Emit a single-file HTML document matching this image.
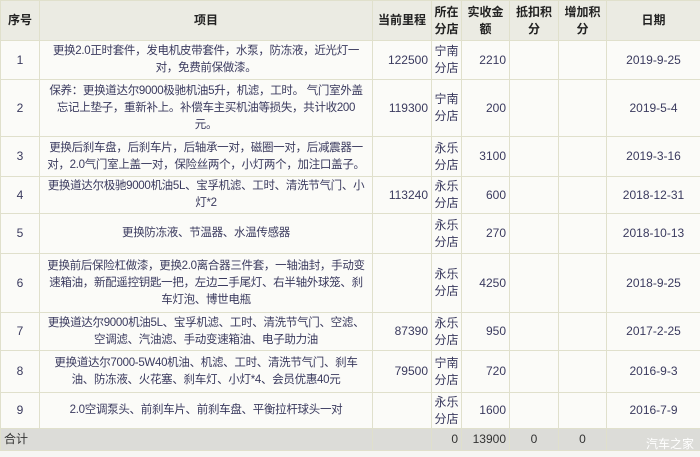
<!DOCTYPE html>
<html><head><meta charset="utf-8">
<style>
html,body{margin:0;padding:0;width:700px;height:457px;overflow:hidden;background:#f6f6f4;}
table{position:absolute;left:0;top:0;border-collapse:collapse;table-layout:fixed;width:700px;
font-family:"Liberation Sans","Noto Sans CJK SC",sans-serif;font-size:12px;color:#3a3a5e;line-height:17px;}
td,th{border:1px solid #e0e0cc;padding:0 3px;background:#fbfbf8;overflow:hidden;}
th{background:#ebebe3;color:#222;font-weight:bold;line-height:17px;}
td.p{padding:0;font-size:11.5px;letter-spacing:-0.3px;white-space:nowrap;}
td.s,th.s{padding:0;text-align:center;}
.c{text-align:center}.r{text-align:right}
tr.t td{background:#dcdcd8;color:#333;}
.wm{position:absolute;right:6px;top:437px;color:#fff;font-family:"Noto Sans CJK SC",sans-serif;font-size:12px;line-height:14px}
</style></head><body>
<table>
<colgroup><col style="width:39px"><col style="width:333px"><col style="width:59px"><col style="width:30px"><col style="width:48px"><col style="width:49px"><col style="width:48px"><col style="width:94px"></colgroup>
<tr style="height:40px"><th>序号</th><th>项目</th><th>当前里程</th><th class="s">所在分店</th><th>实收金额</th><th>抵扣积分</th><th>增加积分</th><th>日期</th></tr>
<tr style="height:39px"><td class="c">1</td><td class="c p">更换2.0正时套件，发电机皮带套件，水泵，防冻液，近光灯一<br>对，免费前保做漆。</td><td class="r">122500</td><td class="s">宁南分店</td><td class="r">2210</td><td></td><td></td><td class="c">2019-9-25</td></tr>
<tr style="height:57px"><td class="c">2</td><td class="c p">保养：更换道达尔9000极驰机油5升，机滤，工时。 气门室外盖<br>忘记上垫子，重新补上。补偿车主买机油等损失，共计收200<br>元。</td><td class="r">119300</td><td class="s">宁南分店</td><td class="r">200</td><td></td><td></td><td class="c">2019-5-4</td></tr>
<tr style="height:40px"><td class="c">3</td><td class="c p">更换后刹车盘，后刹车片，后轴承一对，磁圈一对，后减震器一<br>对，2.0气门室上盖一对，保险丝两个，小灯两个，加注口盖子。</td><td class="r"></td><td class="s">永乐分店</td><td class="r">3100</td><td></td><td></td><td class="c">2019-3-16</td></tr>
<tr style="height:37px"><td class="c">4</td><td class="c p">更换道达尔极驰9000机油5L、宝孚机滤、工时、清洗节气门、小<br>灯*2</td><td class="r">113240</td><td class="s">永乐分店</td><td class="r">600</td><td></td><td></td><td class="c">2018-12-31</td></tr>
<tr style="height:40px"><td class="c">5</td><td class="c p">更换防冻液、节温器、水温传感器</td><td class="r"></td><td class="s">永乐分店</td><td class="r">270</td><td></td><td></td><td class="c">2018-10-13</td></tr>
<tr style="height:59px"><td class="c">6</td><td class="c p">更换前后保险杠做漆，更换2.0离合器三件套，一轴油封，手动变<br>速箱油，新配遥控钥匙一把，左边二手尾灯、右半轴外球笼、刹<br>车灯泡、博世电瓶</td><td class="r"></td><td class="s">永乐分店</td><td class="r">4250</td><td></td><td></td><td class="c">2018-9-25</td></tr>
<tr style="height:38px"><td class="c">7</td><td class="c p">更换道达尔9000机油5L、宝孚机滤、工时、清洗节气门、空滤、<br>空调滤、汽油滤、手动变速箱油、电子助力油</td><td class="r">87390</td><td class="s">永乐分店</td><td class="r">950</td><td></td><td></td><td class="c">2017-2-25</td></tr>
<tr style="height:42px"><td class="c">8</td><td class="c p">更换道达尔7000-5W40机油、机滤、工时、清洗节气门、刹车<br>油、防冻液、火花塞、刹车灯、小灯*4、会员优惠40元</td><td class="r">79500</td><td class="s">宁南分店</td><td class="r">720</td><td></td><td></td><td class="c">2016-9-3</td></tr>
<tr style="height:36px"><td class="c">9</td><td class="c p">2.0空调泵头、前刹车片、前刹车盘、平衡拉杆球头一对</td><td class="r"></td><td class="s">永乐分店</td><td class="r">1600</td><td></td><td></td><td class="c">2016-7-9</td></tr>
<tr class="t" style="height:22px"><td colspan="2" style="text-align:left">合计</td><td class="r"></td><td class="r">0</td><td class="r">13900</td><td class="c">0</td><td class="c">0</td><td></td></tr>
</table>
<div class="wm">汽车之家</div>
</body></html>
